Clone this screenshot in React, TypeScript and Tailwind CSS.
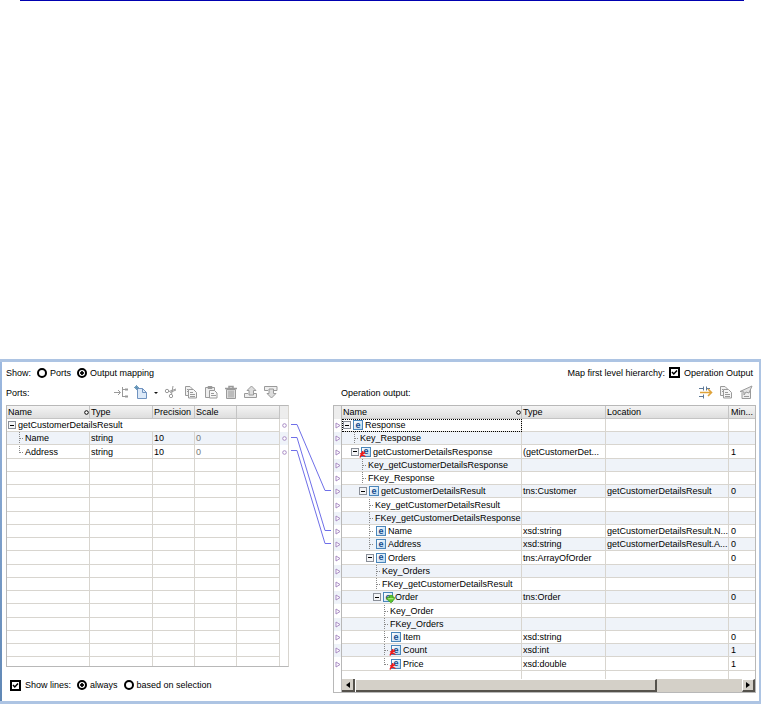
import React from "react";
import { clsx } from "clsx";

type Mark = "none" | "element" | "required" | "repeat";
type Node = {
  level: number;
  open?: boolean;
  last?: boolean;
  mark: Mark;
  name: string;
  type?: string;
  location?: string;
  min?: string;
};

const NODES: Node[] = [
  { level: 0, open: true, mark: "element", name: "Response" },
  { level: 1, mark: "none", name: "Key_Response" },
  { level: 1, open: true, mark: "required", name: "getCustomerDetailsResponse", type: "(getCustomerDet...", min: "1" },
  { level: 2, mark: "none", name: "Key_getCustomerDetailsResponse" },
  { level: 2, mark: "none", name: "FKey_Response" },
  { level: 2, open: true, mark: "element", name: "getCustomerDetailsResult", type: "tns:Customer", location: "getCustomerDetailsResult", min: "0" },
  { level: 3, mark: "none", name: "Key_getCustomerDetailsResult" },
  { level: 3, mark: "none", name: "FKey_getCustomerDetailsResponse" },
  { level: 3, mark: "element", name: "Name", type: "xsd:string", location: "getCustomerDetailsResult.N...", min: "0" },
  { level: 3, mark: "element", name: "Address", type: "xsd:string", location: "getCustomerDetailsResult.A...", min: "0" },
  { level: 3, open: true, mark: "element", name: "Orders", type: "tns:ArrayOfOrder", min: "0" },
  { level: 4, mark: "none", name: "Key_Orders" },
  { level: 4, mark: "none", name: "FKey_getCustomerDetailsResult" },
  { level: 4, open: true, mark: "repeat", name: "Order", type: "tns:Order", min: "0" },
  { level: 5, mark: "none", name: "Key_Order" },
  { level: 5, mark: "none", name: "FKey_Orders" },
  { level: 5, mark: "element", name: "Item", type: "xsd:string", min: "0" },
  { level: 5, mark: "required", name: "Count", type: "xsd:int", min: "1" },
  { level: 5, last: true, mark: "required", name: "Price", type: "xsd:double", min: "1" },
];

const INDENT = ["pl-px", "pl-[9px]", "pl-[17px]", "pl-[24px]", "pl-[31px]", "pl-[39px]"];

const rowHeight = (i: number) => (i % 4 === 2 ? "h-[14px]" : "h-[13px]");
const CELL = "overflow-hidden whitespace-nowrap border-b border-r border-[#d8d5cf] p-0 align-middle leading-3";
const HEAD = "overflow-hidden whitespace-nowrap border-b border-r border-[#c4c4c4] bg-linear-to-b from-[#f4f4f4] to-[#dedede] p-0 text-left align-middle font-normal leading-3";

function Expander() {
  return (
    <button type="button" aria-label="Collapse" className="flex size-2 shrink-0 items-center justify-center border border-[#8a8f98] bg-[#f4f5f7]">
      <span className="h-px w-1 bg-black" />
    </button>
  );
}

function Branch({ last }: { last?: boolean }) {
  return (
    <span className="flex w-2 shrink-0 self-stretch pl-[3px]">
      <svg className="h-full w-[5px]" viewBox="0 0 5 14" preserveAspectRatio="xMinYMin slice" fill="none" stroke="#888" strokeDasharray="1 1" shapeRendering="crispEdges">
        <path d={last ? "M.5 0V7M1 6.500H5" : "M.5 0V14M1 6.500H5"} />
      </svg>
    </span>
  );
}

function ElementIcon({ mark }: { mark: Mark }) {
  return (
    <span className="relative flex size-[10px] shrink-0 items-center justify-center border border-[#4a86ba] bg-linear-to-br from-white to-[#b9d6ee]">
      <span aria-hidden="true" className="text-[9px] leading-[7px] font-bold text-[#174a8c]">e</span>
      {mark === "required" && (
        <svg className="absolute top-[3px] -left-[3px] size-[7px]" viewBox="0 0 7 7" stroke="#f01818" strokeWidth="1.400">
          <path d="M1 6.500L4 0M1 2.500L6.500 5.500M3 3L6 1.500" fill="none" />
        </svg>
      )}
      {mark === "repeat" && (
        <svg className="absolute top-[2px] left-[2px] h-2 w-[9px]" viewBox="0 0 8 7">
          <path d="M0 3L2 1.500L3 2.500V0H6V2L7 1.500L8 3L4.500 7Z" fill="#5cc52e" stroke="#3c8f1c" strokeWidth=".5" />
          <path d="M2 3.200H6.500" stroke="#b4ec8a" />
        </svg>
      )}
    </span>
  );
}

function Dot({ className }: { className: string }) {
  return (
    <svg className={clsx("size-[5px] shrink-0", className)} viewBox="0 0 5 5" fill="white" stroke="currentColor">
      <circle cx="2.500" cy="2.500" r="1.800" />
    </svg>
  );
}

function Arrow() {
  return (
    <svg className="ml-px h-[7px] w-[6px]" viewBox="0 0 6 7" fill="white" stroke="#a98cc4">
      <path d="M1 1L5 3.500L1 6Z" />
    </svg>
  );
}

function Radio({ name, label, checked }: { name: string; label: string; checked?: boolean }) {
  return (
    <label className="flex items-center gap-[3px]">
      <input
        type="radio"
        name={name}
        defaultChecked={checked}
        className="size-[10px] appearance-none rounded-full border-2 border-black bg-white checked:bg-[radial-gradient(circle,#000_0_1.500px,#fff_2px)]"
      />
      {label}
    </label>
  );
}

function Check({ label, before }: { label: string; before?: boolean }) {
  return (
    <label className="flex items-center gap-1">
      {before && <span>Map first level hierarchy:</span>}
      <span className="grid">
        <input type="checkbox" defaultChecked className="peer col-start-1 row-start-1 size-[11px] appearance-none border-2 border-black bg-white" />
        <svg className="pointer-events-none invisible col-start-1 row-start-1 size-[11px] peer-checked:visible" viewBox="0 0 11 11" fill="none" stroke="#000" strokeWidth="1.500">
          <path d="M3 5L4.800 7L8 3.500" />
        </svg>
      </span>
      <span>{label}</span>
    </label>
  );
}

function Tool({ label, className, children }: { label: string; className?: string; children: React.ReactNode }) {
  return (
    <button type="button" aria-label={label} className={clsx("h-[14px] shrink-0", className ?? "w-[14px]")}>
      <svg className="h-[14px] w-full" viewBox={className === "w-[4px]" ? "1 0 4 14" : "0 0 14 14"} fill="none" stroke="#9a9a9a">
        {children}
      </svg>
    </button>
  );
}

function Copy() {
  return (
    <>
      <path d="M1.500 1.500H6L8.500 4V10.500H1.500Z" fill="#f2f2f2" />
      <path d="M4.500 4.500H9.500L12.500 7.500V13H4.500Z" fill="#f6f6f6" />
      <path d="M6 7.500H9M6 9.500H11M6 11.500H11M3 4.500H4M3 6.500H4" />
    </>
  );
}

function PortsTable() {
  const rows = [
    { name: "getCustomerDetailsResult" },
    { name: "Name", type: "string", precision: "10", scale: "0" },
    { name: "Address", type: "string", precision: "10", scale: "0" },
    ...Array.from({ length: 16 }, () => ({ name: "" })),
  ] as { name: string; type?: string; precision?: string; scale?: string }[];
  return (
    <table className="w-full table-fixed border-separate border-spacing-0 border border-[#b8b8b8] border-r-[#d8d5cf]">
      <colgroup>
        <col className="w-[83px]" />
        <col className="w-[63px]" />
        <col className="w-[42px]" />
        <col className="w-[42px]" />
        <col />
        <col className="w-[8px]" />
      </colgroup>
      <thead>
        <tr className="h-[13px]">
          <th className={HEAD}>
            <span className="flex items-center justify-between pl-px">Name <Dot className="text-black" /></span>
          </th>
          <th className={clsx(HEAD, "pl-px")}>Type</th>
          <th className={clsx(HEAD, "pl-px")}>Precision</th>
          <th className={clsx(HEAD, "pl-px")}>Scale</th>
          <th className={HEAD} />
          <th className="border-b border-[#e6e6e6] bg-[#ededed] p-0" />
        </tr>
      </thead>
      <tbody>
        {rows.map((r, i) => (
          <tr key={i} className={clsx(i === 18 ? "h-[9px]" : rowHeight(i), i === 1 && "bg-[#eff3f9]")}>
            {i === 0 ? (
              <td colSpan={4} className={CELL}>
                <span className="flex items-center gap-[2px] pl-px"><Expander />{r.name}</span>
              </td>
            ) : (
              <>
                <td className={clsx(CELL, i === 18 && "border-b-0")}>
                  {r.name && (
                    <span className="flex h-3 items-center gap-px pl-[9px]"><Branch last={i === 2} />{r.name}</span>
                  )}
                </td>
                <td className={clsx(CELL, "pl-px", i === 18 && "border-b-0")}>{r.type}</td>
                <td className={clsx(CELL, "pl-px", i === 18 && "border-b-0")}>{r.precision}</td>
                <td className={clsx(CELL, "pl-px text-[#777]", i === 18 && "border-b-0")}>{r.scale}</td>
              </>
            )}
            <td className={clsx(CELL, i === 18 && "border-b-0")} />
            <td className="p-0 align-middle">{i < 3 && <Dot className="mx-auto text-[#a98cc4]" />}</td>
          </tr>
        ))}
      </tbody>
    </table>
  );
}

function OutputTable() {
  return (
    <div className="border border-[#b8b8b8]">
      <table className="w-full table-fixed border-separate border-spacing-0">
        <colgroup>
          <col className="w-[8px]" />
          <col className="w-[180px]" />
          <col className="w-[84px]" />
          <col />
          <col className="w-[26px]" />
        </colgroup>
        <thead>
          <tr className="h-[13px]">
            <th className="border-r border-[#b8b8b8] bg-[#ededed] p-0" />
            <th className={HEAD}>
              <span className="flex items-center justify-between pl-px">Name <Dot className="text-black" /></span>
            </th>
            <th className={clsx(HEAD, "pl-px")}>Type</th>
            <th className={clsx(HEAD, "pl-px")}>Location</th>
            <th className={clsx(HEAD, "border-r-0 pl-[2px]")}>Min...</th>
          </tr>
        </thead>
        <tbody>
          {NODES.map((n, i) => (
            <tr key={i} className={clsx(rowHeight(i), i % 2 === 1 && "bg-[#eff3f9]")}>
              <td className="border-r border-[#b8b8b8] p-0 align-middle"><Arrow /></td>
              <td className={clsx(CELL, i === 0 && "outline outline-1 -outline-offset-1 outline-dotted outline-black")}>
                <span className={clsx("flex h-3 items-center", INDENT[n.level])}>
                  {n.open ? <Expander /> : <Branch last={n.last} />}
                  {n.mark !== "none" && <span className="flex pr-px pl-[2px]"><ElementIcon mark={n.mark} /></span>}
                  <span className="pl-px">{n.name}</span>
                </span>
              </td>
              <td className={clsx(CELL, "pl-px")}>{n.type}</td>
              <td className={clsx(CELL, "pl-px")}>{n.location}</td>
              <td className={clsx(CELL, "border-r-0 pl-[2px]")}>{n.min}</td>
            </tr>
          ))}
          <tr className="h-2">
            <td className="border-r border-[#b8b8b8] p-0" />
            <td className="border-r border-[#d8d5cf] p-0" />
            <td className="border-r border-[#d8d5cf] p-0" />
            <td className="border-r border-[#d8d5cf] p-0" />
            <td className="p-0" />
          </tr>
        </tbody>
      </table>
      <div className="flex h-[13px]">
        <div className="w-2 border-r border-[#b8b8b8]" />
        <div className="flex flex-1 bg-[#d4d0c8]">
          <button type="button" aria-label="Scroll left" className="flex w-[13px] items-center justify-center border-r-2 border-b-2 border-[#55524c]">
            <svg className="h-[6px] w-[4px]" viewBox="0 0 4 6"><path d="M4 0V6L0 3Z" /></svg>
          </button>
          <div className="flex flex-1 border-l border-white">
            <div className="w-[78%] border-t border-r-2 border-b-2 border-t-white border-r-[#55524c] border-b-[#55524c]" />
          </div>
          <button type="button" aria-label="Scroll right" className="flex w-[13px] items-center justify-center border-t border-r-2 border-b-2 border-l border-t-white border-r-[#55524c] border-b-[#55524c] border-l-white">
            <svg className="h-[6px] w-[4px]" viewBox="0 0 4 6"><path d="M0 0V6L4 3Z" /></svg>
          </button>
        </div>
      </div>
    </div>
  );
}

export default function App() {
  return (
    <main className="bg-white font-['Liberation_Sans',sans-serif] text-[9px] leading-3 text-black">
      <div className="mr-[17px] ml-5 h-px bg-[#0000b0]" />
      <section className="mt-[358px] flex border-t-[3px] border-r-2 border-b-[3px] border-[#adc4e3]">
        <div className="w-[2px] shrink-0 bg-linear-to-b from-[#9db9e0] to-[#5f87b5]" />
        <div className="min-w-0 flex-1 pr-[3px] pl-1">
          <header className="flex h-[21px] items-center justify-between pr-[3px]">
            <div className="flex items-center gap-[6px]">
              <span>Show:</span>
              <Radio name="view" label="Ports" />
              <Radio name="view" label="Output mapping" checked />
            </div>
            <Check before label="Operation Output" />
          </header>
          <div className="flex items-start">
            <div className="w-[283px] shrink-0">
              <div className="flex h-[22px] items-start justify-between pt-[2px] pr-[11px]">
                <span className="pt-[2px]">Ports:</span>
                <div className="flex items-center gap-[6px]">
                  <Tool label="Link">
                    <path d="M0 7.500H6M4 5L6.500 7.500L4 10M8.500 2V12M9 4.500H11M9 11.500H11" />
                    <path d="M11 3.500H14V5.500H11ZM11 10.500H14V12.500H11Z" fill="#9a9a9a" stroke="none" />
                  </Tool>
                  <Tool label="New">
                    <path d="M3.500 3.500H8.500L12.500 7.500V13.500H3.500Z" fill="#dce9f8" stroke="#7093c0" />
                    <path d="M8.500 3.500V7.500H12.500" stroke="#7093c0" />
                    <path d="M2.500 0V5M0 2.500H5M1 1L4 4M4 1L1 4" stroke="#4f86ad" strokeWidth=".8" />
                  </Tool>
                  <Tool label="New options" className="w-[4px]">
                    <path d="M1 7H5L3 9Z" fill="#111" stroke="none" />
                  </Tool>
                  <Tool label="Cut">
                    <circle cx="3" cy="6" r="1.700" />
                    <circle cx="7" cy="11" r="1.700" />
                    <path d="M5 6.500L12 4M7.500 9.500L9 1M6 7.500L12 5" />
                  </Tool>
                  <Tool label="Copy"><Copy /></Tool>
                  <Tool label="Paste">
                    <path d="M1.500 2.500H10.500V12.500H1.500ZM4 1.500H8V3.500H4Z" fill="#eee" />
                    <path d="M5.500 5.500H10.500L13 8V13H5.500Z" fill="#f8f8f8" />
                    <path d="M7 8.500H10M7 10.500H12" />
                  </Tool>
                  <Tool label="Delete">
                    <path d="M1 3.500H13M5 3V1.500H9V3" strokeWidth="1.500" />
                    <path d="M2.500 4.500H11.500V13.500H2.500Z" fill="#ddd" />
                    <path d="M5 5.500V12.500M7 5.500V12.500M9 5.500V12.500" />
                  </Tool>
                  <Tool label="Move up">
                    <path d="M4 8.500H.5V12.500H12.500V8.500H10" fill="#eee" />
                    <path d="M5 10V5.500H3L7.500 1L12 5.500H9.500V10Z" fill="#ddd" />
                  </Tool>
                  <Tool label="Move down">
                    <path d="M4 5.500H.5V1.500H13V5.500H10" fill="#eee" />
                    <path d="M5 4V8.500H3L7.500 13L12 8.500H9.500V4Z" fill="#ddd" />
                  </Tool>
                </div>
              </div>
              <PortsTable />
              <div className="flex items-center gap-[6px] pt-3 pl-1">
                <Check label="Show lines:" />
                <Radio name="lines" label="always" checked />
                <Radio name="lines" label="based on selection" />
              </div>
            </div>
            <svg className="mt-[22px] h-[262px] w-[44px] shrink-0" viewBox="289 405 44 262" fill="none" stroke="#6f6fe8">
              <path d="M291 424.500H297L325 490.500H331M291 437.500H297L325 530.500H331M291 450.500H297L325 543.500H331" />
            </svg>
            <div className="min-w-0 flex-1">
              <div className="flex h-[22px] items-start justify-between pt-[2px] pr-[3px] pl-2">
                <span className="pt-[2px]">Operation output:</span>
                <div className="flex gap-[6px]">
                  <Tool label="Map">
                    <path d="M0 3.500H5M0 11.500H5M4.500 1.500V5.500M4.500 9.500V13.500M7.500 1.500V5.500M8 3.500H11" stroke="#5d7897" />
                    <path d="M1 7.500H12M9 4L12.500 7.500L9 11" stroke="#dfa33b" strokeWidth="1.600" />
                  </Tool>
                  <Tool label="Copy mapping"><Copy /></Tool>
                  <Tool label="Edit">
                    <path d="M3 7.500V13.500H11.500V5" fill="#eee" />
                    <path d="M1 6.500L13 1L10 8L7 7L5 10V7Z" fill="#e4e4e4" />
                    <path d="M5 11.500H10" />
                  </Tool>
                </div>
              </div>
              <OutputTable />
              <div className="h-2" />
            </div>
          </div>
        </div>
      </section>
    </main>
  );
}
